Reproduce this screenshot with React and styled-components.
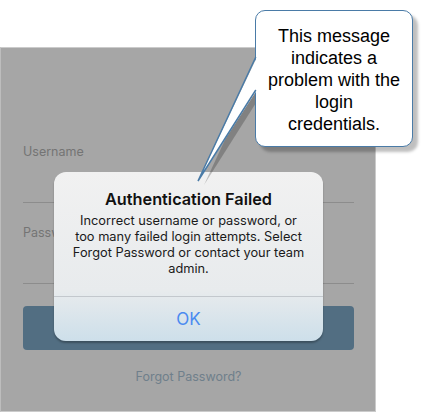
import React from 'react';
import styled, { createGlobalStyle } from 'styled-components';

const GlobalStyle = createGlobalStyle`
    body {
        margin: 0;
        background: #ffffff;
    }
`

const Page = styled.div`
    position: relative;
    width: 429px;
    height: 413px;
    overflow: hidden;
    font-family: Inter, "Noto Sans", sans-serif;
`

const Screen = styled.div`
    margin-top: 47px;
    width: 376px;
    height: 365px;
    box-sizing: border-box;
    background: #a6a6a6;
    border: 1px solid #cbcbcb;
    border-left: 1px solid #bdbdbd;
    padding: 95px 21px 0 22px;
    display: flex;
    flex-direction: column;
`

const Field = styled.div`
    height: 60px;
    box-sizing: border-box;
    border-bottom: 1px solid #8c8c8c;
    margin-bottom: ${(props) => props.gap}px;
`

const Label = styled.div`
    font-size: 12.5px;
    line-height: 18px;
    color: #747474;
`

const SignInButton = styled.div`
    height: 44px;
    border-radius: 4px;
    background: #526e82;
`

const ForgotLink = styled.div`
    margin-top: 18px;
    text-align: center;
    font-size: 12.5px;
    line-height: 18px;
    color: #6f7f8b;
`

const Alert = styled.div`
    position: absolute;
    left: 54px;
    top: 172px;
    width: 269px;
    height: 169px;
    border-radius: 12px;
    overflow: hidden;
    display: flex;
    flex-direction: column;
    background: linear-gradient(#f1f1f1 0%, #e8ebed 70%, #cddfea 100%);
    box-shadow: 0 2px 2px rgba(0, 0, 0, 0.28);
`

const AlertBody = styled.div`
    padding: 16px 8px 0;
    height: 125px;
    box-sizing: border-box;
    text-align: center;
    border-bottom: 1px solid #c3c8cd;
`

const AlertTitle = styled.div`
    font-size: 16.3px;
    font-weight: 600;
    line-height: 22px;
    color: #111111;
    margin-bottom: 3px;
`

const AlertText = styled.div`
    font-size: 12.8px;
    line-height: 16px;
    color: #1a1a1a;
`

const AlertAction = styled.div`
    flex: 1;
    display: flex;
    align-items: center;
    justify-content: center;
    font-size: 17px;
    color: #4a8af0;
`

const Callout = styled.div`
    position: absolute;
    left: 255px;
    top: 10px;
    width: 158px;
    height: 137px;
`

const CalloutBox = styled.div`
    position: relative;
    width: 100%;
    height: 100%;
    box-sizing: border-box;
    background: #ffffff;
    border: 1.5px solid #4a7ba7;
    border-radius: 10px;
    box-shadow: 5px 5px 3px rgba(0, 0, 0, 0.25);
    display: flex;
    align-items: center;
    justify-content: center;
    text-align: center;
    font-family: "Liberation Sans", Arial, sans-serif;
    font-size: 18px;
    line-height: 22px;
    color: #000000;
    padding: 2px 4px 0;
`

const Tail = styled.svg`
    position: absolute;
    left: -60px;
    top: 0;
    overflow: visible;
    z-index: ${(props) => props.layer};
`

const App = () => {
    return (
        <Page>
            <GlobalStyle />
            <Screen>
                <Field gap={21}><Label>Username</Label></Field>
                <Field gap={22}><Label>Password</Label></Field>
                <SignInButton />
                <ForgotLink>Forgot Password?</ForgotLink>
            </Screen>

            <Alert>
                <AlertBody>
                    <AlertTitle>Authentication Failed</AlertTitle>
                    <AlertText>
                        Incorrect username or password, or<br />
                        too many failed login attempts. Select<br />
                        Forgot Password or contact your team<br />
                        admin.
                    </AlertText>
                </AlertBody>
                <AlertAction>OK</AlertAction>
            </Alert>

            <Callout>
                {/* shadow of the pointer */}
                <Tail width="64" height="180" layer={0}>
                    <polygon points="66,52 66,85 9,175" fill="rgba(0,0,0,0.22)" />
                </Tail>
                <CalloutBox>
                    <div>
                        This message<br />
                        indicates a<br />
                        problem with the<br />
                        login<br />
                        credentials.
                    </div>
                </CalloutBox>
                <Tail width="64" height="180" layer={2}>
                    <polygon points="62,47 62,80 3,171" fill="#ffffff" />
                    <polyline points="60.8,47 3,171 60.8,80" fill="none" stroke="#4a7ba7" strokeWidth="1.5" strokeLinejoin="miter" />
                </Tail>
            </Callout>
        </Page>
    );
};

export default App;
